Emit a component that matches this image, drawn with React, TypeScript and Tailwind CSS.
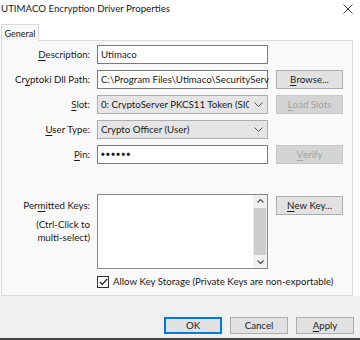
import React from "react";

const font = { fontFamily: 'Lato, "Noto Sans", sans-serif' };
const FS = "text-[9.7px]";

function U({ children }: { children: React.ReactNode }) {
  return <span className="underline underline-offset-[2px] decoration-1">{children}</span>;
}

function Chevron() {
  return (
    <svg width="9" height="5" viewBox="0 0 9 5" className="shrink-0">
      <path d="M0.5 0.5 L4.5 4.5 L8.5 0.5" fill="none" stroke="#555" strokeWidth="1" />
    </svg>
  );
}

function Btn({ children, disabled }: { children: React.ReactNode; disabled?: boolean }) {
  return (
    <div
      className={
        "h-[19px] w-[67px] flex items-center justify-center leading-none border " +
        FS +
        " " +
        (disabled ? "bg-[#d4d4d4] border-[#c6c6c6] text-[#a0a0a0]" : "bg-[#e1e1e1] border-[#adadad] text-[#1a1a1a]")
      }
    >
      {children}
    </div>
  );
}

function Label({ children }: { children: React.ReactNode }) {
  return <div className={"w-[88px] text-right text-[#1a1a1a] leading-none whitespace-nowrap " + FS}>{children}</div>;
}

export default function App() {
  return (
    <div className="w-[360px] h-[340px] bg-[#f0f0f0] flex flex-col border-b-2 border-[#454545] overflow-hidden" style={font}>
      {/* title bar */}
      <div className="h-[17px] bg-white flex items-center justify-between pl-[1px] pr-[7px]">
        <span className="text-[9.7px] text-[#1a1a1a] leading-none">UTIMACO Encryption Driver Properties</span>
        <svg width="10" height="10" viewBox="0 0 10 10">
          <path d="M0.5 0.5 L9.5 9.5 M9.5 0.5 L0.5 9.5" stroke="#444" strokeWidth="1" />
        </svg>
      </div>
      {/* tab strip */}
      <div className="h-[23px] bg-white flex items-end pl-[1px]">
        <div className="h-[17px] w-[38px] bg-[#f9f9f9] border border-b-0 border-[#d9d9d9] flex items-center justify-center text-[9px] text-[#1a1a1a] leading-none relative top-[1px] z-10">
          General
        </div>
      </div>
      {/* panel */}
      <div className="bg-white pl-[1px] pr-[7px]">
        <div className="h-[256px] bg-[#f9f9f9] border border-[#d9d9d9] pt-[4px] flex flex-col">
          <div className="flex flex-col gap-[6px]">
            {/* Description */}
            <div className="flex items-center gap-[7px] h-[19px]">
              <Label>
                <U>D</U>escription:
              </Label>
              <div className={"w-[171px] h-[19px] bg-white border border-[#7a7a7a] flex items-center px-[3px] leading-none text-[#1a1a1a] " + FS}>
                Utimaco
              </div>
            </div>
            {/* Cryptoki */}
            <div className="flex items-center gap-[7px] h-[19px]">
              <Label>
                Cr<U>y</U>ptoki Dll Path:
              </Label>
              <div className={"w-[171px] h-[19px] bg-white border border-[#7a7a7a] flex items-center px-[3px] leading-none text-[#1a1a1a] whitespace-nowrap " + FS}>
                C:\Program Files\Utimaco\SecurityServ
              </div>
              <div className="ml-[1px]">
                <Btn>
                  <U>B</U>rowse...
                </Btn>
              </div>
            </div>
            {/* Slot */}
            <div className="flex items-center gap-[7px] h-[19px]">
              <Label>
                <U>S</U>lot:
              </Label>
              <div className={"w-[171px] h-[19px] bg-[#e5e5e5] border border-[#adadad] flex items-center pl-[3px] pr-[4px] leading-none text-[#1a1a1a] " + FS}>
                <span className="flex-1 min-w-0 overflow-hidden whitespace-nowrap">0: CryptoServer PKCS11 Token (SI003</span>
                <span className="pl-[5px]">
                  <Chevron />
                </span>
              </div>
              <div className="ml-[1px]">
                <Btn disabled>
                  <U>L</U>oad Slots
                </Btn>
              </div>
            </div>
            {/* User type */}
            <div className="flex items-center gap-[7px] h-[19px]">
              <Label>
                <U>U</U>ser Type:
              </Label>
              <div className={"w-[171px] h-[19px] bg-[#e5e5e5] border border-[#adadad] flex items-center pl-[3px] pr-[4px] leading-none text-[#1a1a1a] " + FS}>
                <span className="flex-1 whitespace-nowrap">Crypto Officer (User)</span>
                <Chevron />
              </div>
            </div>
            {/* Pin */}
            <div className="flex items-center gap-[7px] h-[19px]">
              <Label>
                <U>P</U>in:
              </Label>
              <div className="w-[171px] h-[19px] bg-white border border-[#7a7a7a] flex items-center px-[3px] text-[6.5px] tracking-[1.2px] leading-none text-[#1a1a1a]">
                ●●●●●●
              </div>
              <div className="ml-[1px]">
                <Btn disabled>
                  <U>V</U>erify
                </Btn>
              </div>
            </div>
          </div>
          {/* Permitted keys */}
          <div className="flex items-start gap-[7px] mt-[30px]">
            <div className={"w-[88px] text-right text-[#1a1a1a] leading-[13px] pt-[5px] flex flex-col items-end whitespace-nowrap " + FS}>
              <span>
                Per<U>m</U>itted Keys:
              </span>
              <span className="mt-[6px]">(Ctrl-Click to</span>
              <span>multi-select)</span>
            </div>
            <div className="w-[171px] h-[75px] bg-white border border-[#828790] flex justify-end">
              <div className="w-[14px] h-full bg-[#f0f0f0] flex flex-col items-center justify-between py-[4px]">
                <svg width="7" height="4" viewBox="0 0 7 4">
                  <path d="M0.5 3.5 L3.5 0.5 L6.5 3.5" fill="none" stroke="#555" strokeWidth="1.2" />
                </svg>
                <div className="w-[12px] flex-1 my-[5px] bg-[#cdcdcd]" />
                <svg width="7" height="4" viewBox="0 0 7 4">
                  <path d="M0.5 0.5 L3.5 3.5 L6.5 0.5" fill="none" stroke="#555" strokeWidth="1.2" />
                </svg>
              </div>
            </div>
            <div className="ml-[1px] mt-[2px]">
              <Btn>
                <U>N</U>ew Key...
              </Btn>
            </div>
          </div>
          {/* checkbox */}
          <div className="flex items-center mt-[6px] pl-[95px] gap-[4px] h-[13px]">
            <div className="w-[12px] h-[12px] border border-[#333] bg-white flex items-center justify-center">
              <svg width="9" height="8" viewBox="0 0 9 8">
                <path d="M0.8 4 L3.3 6.5 L8.2 1" fill="none" stroke="#222" strokeWidth="1.2" />
              </svg>
            </div>
            <span className={"text-[#1a1a1a] leading-none whitespace-nowrap " + FS}>
              Allow Key Storage (Private Keys are non-exportable)
            </span>
          </div>
        </div>
      </div>
      {/* bottom buttons */}
      <div className="flex-1 flex items-start justify-end gap-[8px] pr-[6px] pt-[21px]">
        <div className={"h-[17px] w-[58px] flex items-center justify-center leading-none bg-[#e1e1e1] border-2 border-[#0078d7] text-[#1a1a1a] " + FS}>
          OK
        </div>
        <div className={"h-[17px] w-[58px] flex items-center justify-center leading-none bg-[#e1e1e1] border border-[#adadad] text-[#1a1a1a] " + FS}>
          Cancel
        </div>
        <div className={"h-[17px] w-[58px] flex items-center justify-center leading-none bg-[#e1e1e1] border border-[#adadad] text-[#1a1a1a] " + FS}>
          <U>A</U>pply
        </div>
      </div>
    </div>
  );
}
